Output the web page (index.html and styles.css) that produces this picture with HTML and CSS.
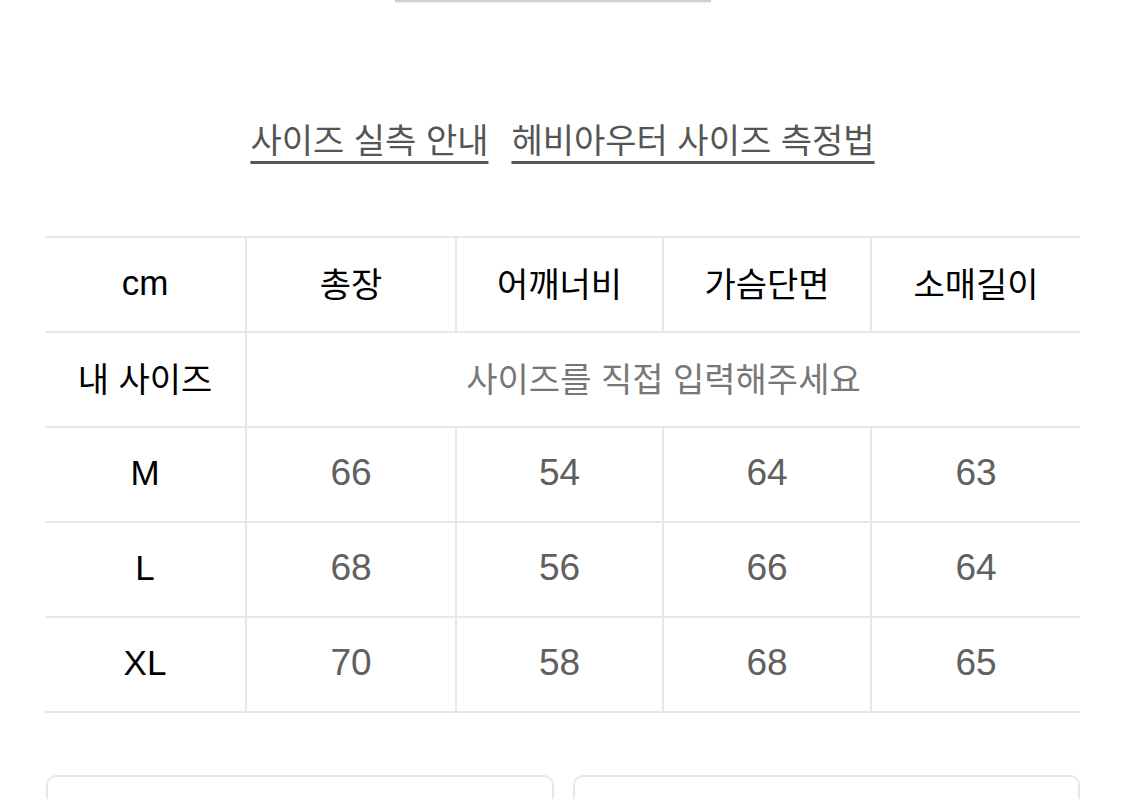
FILE: index.html
```
<!DOCTYPE html>
<html lang="ko">
<head>
<meta charset="utf-8">
<link rel="stylesheet" href="styles.css">
</head>
<body>
<div class="topbar"></div>
<div class="links">
  <a class="link">사이즈 실측 안내</a>
  <a class="link">헤비아우터 사이즈 측정법</a>
</div>
<div class="table">
  <div class="cell head first">cm</div>
  <div class="cell head">총장</div>
  <div class="cell head">어깨너비</div>
  <div class="cell head">가슴단면</div>
  <div class="cell head last">소매길이</div>

  <div class="cell head first ko">내 사이즈</div>
  <div class="cell span last">사이즈를 직접 입력해주세요</div>

  <div class="cell head first">M</div>
  <div class="cell val">66</div>
  <div class="cell val">54</div>
  <div class="cell val">64</div>
  <div class="cell val last">63</div>

  <div class="cell head first">L</div>
  <div class="cell val">68</div>
  <div class="cell val">56</div>
  <div class="cell val">66</div>
  <div class="cell val last">64</div>

  <div class="cell head first">XL</div>
  <div class="cell val">70</div>
  <div class="cell val">58</div>
  <div class="cell val">68</div>
  <div class="cell val last">65</div>
</div>
<div class="buttons">
  <div class="box"></div>
  <div class="box"></div>
</div>
</body>
</html>
```
FILE: styles.css
```
html, body {
  margin: 0;
  padding: 0;
  background: #fff;
  font-family: "Noto Sans CJK KR", "Noto Sans", sans-serif;
  overflow: hidden;
}
.topbar {
  width: 316px;
  height: 2px;
  margin: 0 0 0 395px;
  background: #cfcfcf;
  box-shadow: 0 1px 2px rgba(0,0,0,0.08);
}
.links {
  display: flex;
  justify-content: center;
  gap: 23px;
  margin-top: 112px;
  height: 60px;
}
.link {
  font-size: 34px;
  line-height: 50px;
  color: #555;
  text-decoration: underline;
  text-decoration-thickness: 3px;
  text-underline-offset: 8px;
  text-decoration-color: #555;
}
.table {
  margin: 62px 0 0 45px;
  width: 1035px;
  display: grid;
  grid-template-columns: 202px 210px 207px 208px 208px;
  grid-auto-rows: 95px;
  border-top: 2px solid #e8e8e8;
}
.cell {
  display: flex;
  align-items: center;
  justify-content: center;
  border-right: 2px solid #e8e8e8;
  border-bottom: 2px solid #e8e8e8;
  box-sizing: border-box;
  padding-bottom: 4px;
}
.cell.last {
  border-right: none;
}
.head {
  font-size: 34px;
  color: #000;
  font-weight: 400;
}
.head.first {
  font-family: "Liberation Sans", "Noto Sans CJK KR", sans-serif;
  font-size: 35px;
  color: #000;
}
.head.first.ko {
  font-family: "Noto Sans CJK KR", sans-serif;
  font-size: 34px;
  color: #000;
}
.span {
  grid-column: span 4;
  font-size: 34px;
  color: #777;
}
.val {
  font-family: "Liberation Sans", sans-serif;
  font-size: 37px;
  color: #606060;
}
.buttons {
  display: flex;
  gap: 19px;
  margin: 62px 0 0 46px;
  width: 1034px;
}
.box {
  flex: 1;
  height: 60px;
  border: 2px solid #e8e8e8;
  border-radius: 10px;
}
```
